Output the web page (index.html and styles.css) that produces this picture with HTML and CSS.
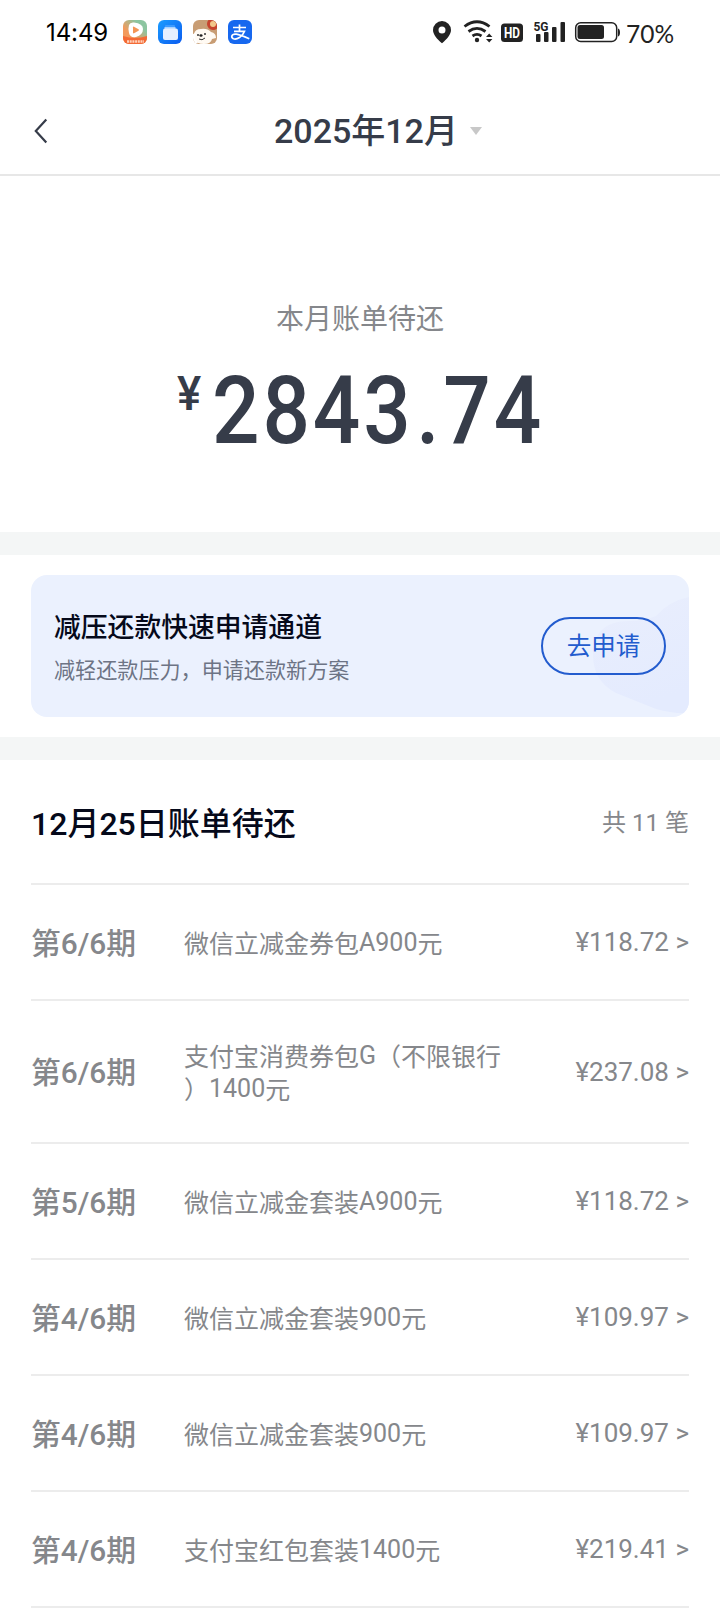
FILE: index.html
```html
<!DOCTYPE html>
<html lang="zh-CN">
<head>
<meta charset="utf-8">
<title>2025年12月账单</title>
<link rel="stylesheet" href="styles.css">
</head>
<body>
<div class="status">
  <span class="clock">14:49</span>
  <div class="apps">
    <svg width="24" height="24" viewBox="0 0 24 24"><defs><linearGradient id="o" x1="0" y1="1" x2="1" y2="0"><stop offset=".35" stop-color="#f39a5c"/><stop offset=".75" stop-color="#8cc5a0"/></linearGradient><clipPath id="c"><rect width="24" height="24" rx="6"/></clipPath></defs><g clip-path="url(#c)"><rect width="24" height="24" fill="url(#o)"/><path d="M0 16q12 4 24 0v8H0z" fill="#f46a35"/><path d="M6 5q1-3 5-2.500q9 1 9 6.500 0 6-7 8-6 1-7-4-1-5 0-8z" fill="#fff"/><path d="M10 7.200q0-1 1-.5l4.500 2.600q1 .7 0 1.400L11 13.300q-1 .4-1-.7z" fill="#f39656"/><path d="M4 21.500h17" stroke="#ffd3bc" stroke-width="2.400" stroke-dasharray="2 .7"/></g></svg>
    <svg width="24" height="24" viewBox="0 0 24 24"><defs><linearGradient id="b" x2="1" y2="1"><stop stop-color="#1b9cff"/><stop offset="1" stop-color="#0b5cf0"/></linearGradient></defs><rect width="24" height="24" rx="6" fill="url(#b)"/><rect x="7" y="5" width="10" height="5" rx="1" fill="#3d9bff"/><path d="M6.500 7h11v3h-11z" fill="#a8d2ff"/><rect x="5" y="8.500" width="15" height="11.500" rx="2" fill="#e6efff"/></svg>
    <svg width="24" height="24" viewBox="0 0 24 24"><g clip-path="url(#c)"><rect width="24" height="24" fill="#c89d74"/><path d="M1 14q1-5 7-5 6-1 10 3 5 1 5 6l-4 1q-1 5-8 5-8 0-9-5z" fill="#fffaf3"/><circle cx="20" cy="4" r="6" fill="#c6432d"/><circle cx="20" cy="4" r="3" fill="#f2c78a"/><path d="M0 14l3-1-1 5 3 5H0z" fill="#fff"/><circle cx="5" cy="15" r="1" fill="#333"/><circle cx="12" cy="14" r="1" fill="#333"/><ellipse cx="8" cy="15.500" rx="1.600" ry="1.200" fill="#222"/><path d="M6 19q3 2 6-1" fill="none" stroke="#333"/></g></svg>
    <svg width="24" height="24" viewBox="0 0 24 24"><rect width="24" height="24" rx="6" fill="#1768ef"/><path d="M5 7.500h13M11.500 4.500v6.500M6 11.300h10.500q-1.500 4-5 6.300-3.500 2-6 1.200-2-.8-1.700-2.600.7-2.400 4.500-2 3.500.5 13 4.500" fill="none" stroke="#fff" stroke-width="1.700"/></svg>
  </div>
  <div class="signals">
    <svg width="190" height="26" viewBox="432 19 190 26">
      <g fill="#222">
        <path fill-rule="evenodd" d="M442 21a9 9 0 0 1 9 9c0 4.500-4 9-9 13.300-5-4.300-9-8.800-9-13.300a9 9 0 0 1 9-9zm0 5.500a3.500 3.500 0 1 0 0 7 3.500 3.500 0 0 0 0-7z"/>
        <circle cx="477" cy="40" r="2.200"/>
        <path d="M486 37l3.200-3.500 3.200 3.500zM486 39l3.200 3.500 3.200-3.500z"/>
        <rect x="501" y="23.500" width="22" height="18.500" rx="3.500"/>
        <rect x="536" y="34" width="4.500" height="8" rx="1"/><rect x="544" y="32" width="4.500" height="10" rx="1"/><rect x="552" y="27" width="4.500" height="15" rx="1"/><rect x="560.500" y="22" width="4.500" height="20" rx="1"/>
        <rect x="577.500" y="25" width="26.500" height="14" rx="2.500"/>
        <path d="M618 28.500q2 .5 2 4t-2 4z"/>
      </g>
      <g fill="none" stroke="#222">
        <path d="M464.500 26.500q12.500-9.500 25 0M468.500 31.500q8.500-6.200 17 0M472.500 36q4.500-3.200 9 0" stroke-width="2.800"/>
        <rect x="575.700" y="22.700" width="41" height="18.800" rx="5" stroke-width="1.500"/>
      </g>
      <text class="hd" x="504" y="38" textLength="16" lengthAdjust="spacingAndGlyphs">HD</text>
      <text class="net" x="533.500" y="31" textLength="15" lengthAdjust="spacingAndGlyphs">5G</text>
    </svg>
    <span class="pct">70%</span>
  </div>
</div>

<header class="nav">
  <svg class="back" width="14" height="26" viewBox="0 0 14 26"><path d="M12.300 1.500L1.800 13l10.500 11.500" fill="none" stroke="#363c49" stroke-width="2.200"/></svg>
  <h1 class="month">2025年12月</h1>
  <span class="caret"></span>
</header>

<section class="summary">
  <p class="summary-label">本月账单待还</p>
  <p class="total"><span class="yen">¥</span><span class="digits">2843<span class="dot">.</span>74</span></p>
</section>

<section class="promo-wrap">
  <div class="promo">
    <svg class="promo-art" width="110" height="142" viewBox="579 575 110 142"><defs><linearGradient id="p" x1="0" y1="0" x2=".3" y2="1"><stop stop-color="#e9eefd"/><stop offset="1" stop-color="#e4ebfe"/></linearGradient></defs><path d="M689 597q-20 4-33 19-12 5-27 5c-24 0-36 12-36 34q0 26 23 38l40 16q17 5 33 4z" fill="url(#p)"/></svg>
    <div class="promo-copy">
      <h2 class="promo-title">减压还款快速申请通道</h2>
      <p class="promo-sub">减轻还款压力，申请还款新方案</p>
    </div>
    <button class="apply">去申请</button>
  </div>
</section>

<main class="bills">
  <div class="bills-head"><h2 class="bills-title">12月25日账单待还</h2><span class="count">共 11 笔</span></div>
  <div class="bill"><span class="term">第6/6期</span><span class="name">微信立减金券包<span class="latin">A900</span>元</span><span class="amount">¥118.72 &gt;</span></div>
  <div class="bill bill-tall"><span class="term">第6/6期</span><span class="name">支付宝消费券包<span class="latin">G</span>（不限银行<br>）<span class="latin">1400</span>元</span><span class="amount">¥237.08 &gt;</span></div>
  <div class="bill"><span class="term">第5/6期</span><span class="name">微信立减金套装<span class="latin">A900</span>元</span><span class="amount">¥118.72 &gt;</span></div>
  <div class="bill"><span class="term">第4/6期</span><span class="name">微信立减金套装<span class="latin">900</span>元</span><span class="amount">¥109.97 &gt;</span></div>
  <div class="bill"><span class="term">第4/6期</span><span class="name">微信立减金套装<span class="latin">900</span>元</span><span class="amount">¥109.97 &gt;</span></div>
  <div class="bill"><span class="term">第4/6期</span><span class="name">支付宝红包套装<span class="latin">1400</span>元</span><span class="amount">¥219.41 &gt;</span></div>
</main>
</body>
</html>
```
FILE: styles.css
```css
* { box-sizing: border-box; }
body {
  margin: 0;
  width: 720px;
  height: 1612px;
  overflow: hidden;
  background: #fff;
  color: #363c49;
  font-family: Roboto, "Noto Sans CJK SC", sans-serif;
}
h1, h2, p { margin: 0; font-weight: 500; }

.status { display: flex; align-items: center; height: 64px; padding-left: 46px; }
.clock { width: 77px; padding-top: 2px; font: 400 24px/30px Inter, sans-serif; letter-spacing: -.1px; color: #000; }
.apps { display: flex; gap: 11px; }
.signals { display: flex; align-items: center; gap: 4px; margin-left: 180px; height: 26px; }
.hd { font: 700 15px Roboto, sans-serif; fill: #fff; }
.net { font: 700 13px Roboto, sans-serif; fill: #222; }
.pct { padding-top: 3px; font: 400 24.500px/30px Lato, sans-serif; color: #222; }

.nav {
  display: flex;
  align-items: center;
  height: 112px;
  padding: 24px 0 0 34px;
  border-bottom: 2px solid #e7e7e7;
}
.back { display: block; margin-right: 226px; }
.month { font-size: 34px; line-height: 44px; }
.caret {
  margin-left: 12px;
  border: 6px solid transparent;
  border-top: 8px solid #c8c8c8;
  border-bottom: 0;
}

.summary { height: 356px; padding-top: 124px; text-align: center; }
.summary-label { font-size: 28px; line-height: 40px; font-weight: 400; color: #85878b; }
.total { display: flex; height: 100px; margin-top: 21px; padding-left: 176px; text-align: left; }
.yen { width: 36px; padding-top: 3px; font-size: 48px; line-height: 60px; transform: scaleX(.95); }
.digits { font-size: 95px; line-height: 100px; letter-spacing: 3.300px; transform: scaleX(.88); transform-origin: left; }
.dot { margin: 0 1px 0 3px; }

.promo-wrap {
  height: 228px;
  padding: 20px 31px;
  border-top: 23px solid #f4f6f6;
  border-bottom: 23px solid #f4f6f6;
}
.promo {
  position: relative;
  display: flex;
  align-items: center;
  justify-content: space-between;
  height: 142px;
  padding: 0 23px;
  border-radius: 16px;
  background: #ebf1fe;
  overflow: hidden;
}
.promo-art { position: absolute; right: 0; top: 0; }
.promo-copy { padding-top: 2px; }
.promo-title { font-size: 26.800px; line-height: 40px; color: #05091a; }
.promo-sub { margin-top: 7px; font-size: 21.100px; line-height: 32px; font-weight: 400; color: #6d7485; }
.apply {
  position: relative;
  width: 125px;
  height: 58px;
  padding: 2px 0 0;
  border: 2px solid #235cce;
  border-radius: 29px;
  background: transparent;
  color: #235cce;
  font: 400 24.500px/36px Roboto, "Noto Sans CJK SC", sans-serif;
}

.bills { padding: 0 31px; }
.bills-head, .bill { display: flex; align-items: center; border-bottom: 2px solid #ececec; }
.bills-head { height: 125px; padding-top: 4px; justify-content: space-between; }
.bills-title { font-size: 32px; line-height: 44px; color: #05091a; }
.count { padding-bottom: 2px; font-size: 24px; line-height: 36px; color: #85878b; }
.bill { height: 116px; color: #85878b; }
.bill-tall { height: 143px; }
.term { width: 153px; padding-bottom: 3px; font-size: 29.800px; font-weight: 500; }
.name { flex: 1; padding-top: 4px; font-size: 25px; line-height: 33px; white-space: nowrap; }
.latin { line-height: 0; vertical-align: 2px; }
.amount { font-size: 26px; line-height: 36px; }
```
